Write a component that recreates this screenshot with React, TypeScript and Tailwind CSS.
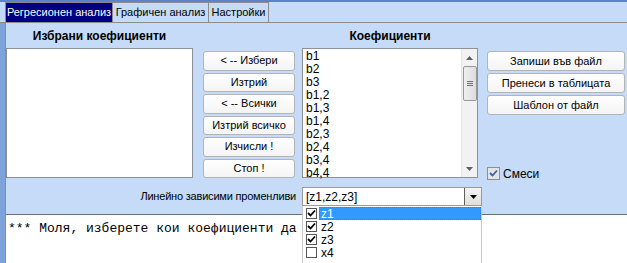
import React from 'react'

const coefs = ['b1', 'b2', 'b3', 'b1,2', 'b1,3', 'b1,4', 'b2,3', 'b2,4', 'b3,4', 'b4,4']
const leftButtons = ['< -- Избери', 'Изтрий', '< -- Всички', 'Изтрий всичко', 'Изчисли !', 'Стоп !']
const rightButtons = ['Запиши във файл', 'Пренеси в таблицата', 'Шаблон от файл']
const vars = [
  { name: 'z1', checked: true },
  { name: 'z2', checked: true },
  { name: 'z3', checked: true },
  { name: 'x4', checked: false },
]

function WinButton({ label }: { label: string }) {
  return (
    <div className="h-[20px] flex items-center justify-center rounded-[3px] border border-[#b4b4b4] bg-gradient-to-b from-white to-[#f4f4f4] text-[11px] leading-none">
      {label}
    </div>
  )
}

function Check({ color = '#000' }: { color?: string }) {
  return (
    <svg width="9" height="9" viewBox="0 0 9 9">
      <path d="M1 4 L3.5 6.5 L8 1.5" fill="none" stroke={color} strokeWidth="1.8" />
    </svg>
  )
}

export default function App() {
  return (
    <div className="w-[627px] h-[263px] relative overflow-hidden bg-[#c5dbf7] font-['Liberation_Sans',Arial,sans-serif] text-black flex flex-col">
      {/* window top edge */}
      <div className="h-[2px] bg-[#5a83c9]" />

      {/* Tabs */}
      <div className="h-[21px] flex items-end pl-[5px] border-b border-[#8c8c8c] text-[11px] leading-none">
        <div className="h-[20px] w-[108px] flex items-center justify-center bg-[#000080] text-white border border-[#8c8c8c] border-b-0">
          Регресионен анализ
        </div>
        <div className="h-[20px] w-[96px] flex items-center justify-center border border-l-0 border-[#8c8c8c] border-b-0">
          Графичен анализ
        </div>
        <div className="h-[20px] w-[60px] flex items-center justify-center border border-l-0 border-[#8c8c8c] border-b-0">
          Настройки
        </div>
      </div>

      <div className="flex flex-1">
        {/* left frame gutter */}
        <div className="w-[5px] bg-[#7ea2da]" />

        <div className="flex-1 flex flex-col border-l border-[#8c8c8c]">
          {/* Top panel */}
          <div className="h-[191px] flex flex-col">
            <div className="h-[155px] flex">
              {/* Selected coefs */}
              <div className="w-[187px] flex flex-col">
                <div className="h-[25px] flex items-center justify-center font-bold text-[12px]">
                  Избрани коефициенти
                </div>
                <div className="h-[130px] bg-white border border-[#8c9099]" />
              </div>

              {/* Action buttons */}
              <div className="w-[92px] ml-[10px] pt-[28px] flex flex-col gap-[2px]">
                {leftButtons.map((b) => (
                  <WinButton key={b} label={b} />
                ))}
              </div>

              {/* Coefficients */}
              <div className="w-[176px] ml-[7px] flex flex-col">
                <div className="h-[25px] flex items-center justify-center font-bold text-[12px]">
                  Коефициенти
                </div>
                <div className="h-[130px] bg-white border border-[#8c9099] flex">
                  <div className="flex-1 pl-[3px] pt-[1px] text-[12px] leading-[13px]">
                    {coefs.map((c) => (
                      <div key={c}>{c}</div>
                    ))}
                  </div>
                  {/* scrollbar */}
                  <div className="w-[16px] bg-[#f2f2f2] border-l border-[#e4e4e4] flex flex-col items-center">
                    <div className="h-[17px] flex items-center justify-center">
                      <svg width="7" height="4" viewBox="0 0 7 4">
                        <path d="M0 4 L3.5 0 L7 4 Z" fill="#606060" />
                      </svg>
                    </div>
                    <div className="w-[14px] h-[35px] rounded-[2px] border border-[#979797] bg-gradient-to-r from-[#f0f0f0] to-[#dcdcdc] flex flex-col items-center justify-center gap-[1px]">
                      <div className="w-[6px] h-px bg-[#707070]" />
                      <div className="w-[6px] h-px bg-[#707070]" />
                      <div className="w-[6px] h-px bg-[#707070]" />
                    </div>
                    <div className="flex-1" />
                    <div className="h-[17px] flex items-center justify-center">
                      <svg width="7" height="4" viewBox="0 0 7 4">
                        <path d="M0 0 L3.5 4 L7 0 Z" fill="#606060" />
                      </svg>
                    </div>
                  </div>
                </div>
              </div>

              {/* Right buttons */}
              <div className="w-[138px] ml-[9px] pt-[28px] flex flex-col">
                <div className="flex flex-col gap-[2px]">
                  {rightButtons.map((b) => (
                    <WinButton key={b} label={b} />
                  ))}
                </div>
                <div className="mt-[52px] flex items-center gap-[3px] text-[12px] leading-none">
                  <div className="w-[13px] h-[13px] border border-[#8f8f8f] bg-[#e4e4e4] flex items-center justify-center">
                    <Check color="#3a5fae" />
                  </div>
                  <span>Смеси</span>
                </div>
              </div>
            </div>

            {/* Linearly dependent variables */}
            <div className="mt-[9px] flex items-center">
              <div className="w-[290px] text-right text-[11px] tracking-[-0.2px] leading-none">Линейно зависими променливи</div>
              <div className="ml-[6px] w-[180px] h-[19px] bg-white border border-[#9a9a9a] flex">
                <div className="flex-1 pl-[3px] flex items-center text-[12px] leading-none">[z1,z2,z3]</div>
                <div className="w-[17px] border-l border-[#5f5f5f] bg-gradient-to-b from-[#f4f4f4] to-[#dedede] flex items-center justify-center">
                  <svg width="7" height="4" viewBox="0 0 7 4">
                    <path d="M0 0 L3.5 4 L7 0 Z" fill="#000" />
                  </svg>
                </div>
              </div>
            </div>
          </div>

          {/* Log text area */}
          <div className="flex-1 bg-white border-t border-[#6e6e6e] pl-[2px] pt-[6px] font-['Liberation_Mono','Courier_New',monospace] text-[13px] leading-[15px] whitespace-nowrap">
            *** Моля, изберете кои коефициенти да
          </div>
        </div>
      </div>

      {/* Open dropdown */}
      <div className="absolute left-[302px] top-[206px] w-[180px] h-[60px] bg-white border-l border-r border-[#c8c8c8] pt-[1px] text-[12px] leading-none">
        {vars.map((v, i) => (
          <div key={v.name} className="h-[13px] flex items-center">
            <div className="w-[11px] h-[11px] ml-[3px] border border-[#555] bg-white flex items-center justify-center">
              {v.checked && <Check />}
            </div>
            <div
              className={
                i === 0
                  ? 'ml-[2px] flex-1 h-[13px] flex items-center pl-[1px] bg-[#3399ff] text-white border border-dotted border-[#c0601a]'
                  : 'ml-[2px] flex-1 h-[13px] flex items-center pl-[2px]'
              }
            >
              {v.name}
            </div>
          </div>
        ))}
      </div>
    </div>
  )
}
